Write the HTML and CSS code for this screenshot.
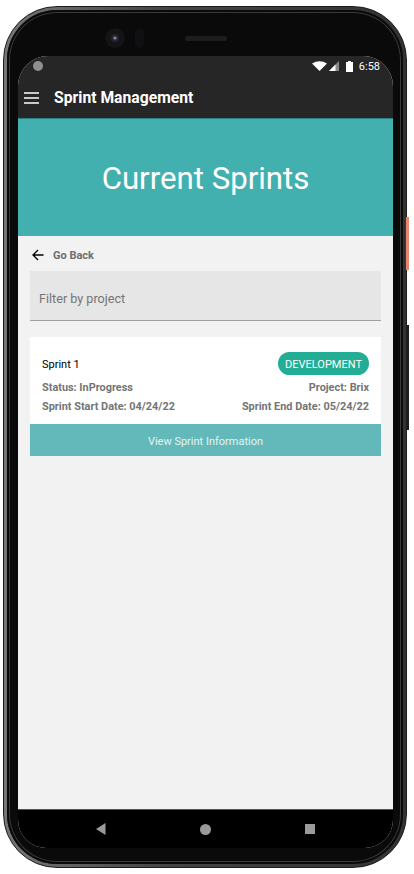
FILE: index.html
```html
<!DOCTYPE html>
<html lang="en">
<head>
    <meta charset="UTF-8">
    <meta name="viewport" content="width=device-width, initial-scale=1.0">
    <title>Sprint Management</title>
    <link rel="stylesheet" href="styles.css">
</head>
<body>
    <div class="phone">
        <span class="side-btn side-orange"></span>
        <span class="side-btn side-dark"></span>
        <div class="bezel">
            <div class="top-hw">
                <svg class="camera" width="24" height="24" viewBox="0 0 24 24">
                    <circle cx="12" cy="12" r="10" fill="#141416"/>
                    <circle cx="12" cy="12" r="4" fill="#23242c"/>
                    <circle cx="12" cy="12" r="1.6" fill="#7f88a8"/>
                </svg>
                <span class="sensor"></span>
                <span class="speaker"></span>
            </div>
            <div class="screen">
                <div class="appbar">
                    <div class="status">
                        <span class="status-dot"></span>
                        <svg class="wifi" width="15" height="10" viewBox="0 0 15 10"><path d="M0 2.500 Q7.500 -2 15 2.500 L7.500 10Z" fill="#fff"/></svg>
                        <svg class="signal" width="10" height="10" viewBox="0 0 10 10"><path d="M10 0V10H0Z" fill="#8a8a8a"/><path d="M6.500 3.500V10H0Z" fill="#fff"/></svg>
                        <svg class="battery" width="7" height="11" viewBox="0 0 7 11"><path d="M2 0H5V1H7V11H0V1H2Z" fill="#fff"/></svg>
                        <span class="clock">6:58</span>
                    </div>
                    <div class="toolbar">
                        <svg class="menu" width="15" height="12" viewBox="0 0 15 12"><path d="M0 1H15M0 6H15M0 11H15" stroke="#fff" stroke-width="1.700"/></svg>
                        <span class="app-title">Sprint Management</span>
                    </div>
                </div>
                <div class="hero">Current Sprints</div>
                <div class="content">
                    <div class="back">
                        <svg width="12" height="12" viewBox="0 0 12 12"><path d="M11.500 6H1M6 1 1 6l5 5" fill="none" stroke="#000" stroke-width="1.300"/></svg>
                        <span>Go Back</span>
                    </div>
                    <div class="filter">Filter by project</div>
                    <div class="card">
                        <div class="row row-top">
                            <span class="sprint-name">Sprint 1</span>
                            <span class="badge">DEVELOPMENT</span>
                        </div>
                        <div class="row row-info">
                            <span>Status: InProgress</span>
                            <span>Project: Brix</span>
                        </div>
                        <div class="row row-info">
                            <span>Sprint Start Date: 04/24/22</span>
                            <span>Sprint End Date: 05/24/22</span>
                        </div>
                    </div>
                    <div class="view-btn">View Sprint Information</div>
                </div>
                <div class="navbar">
                    <svg width="10" height="12" viewBox="0 0 10 12"><path d="M9.500 0V12L0 6Z" fill="#9a9a9a"/></svg>
                    <svg width="11" height="11" viewBox="0 0 11 11"><circle cx="5.500" cy="5.500" r="5.500" fill="#9a9a9a"/></svg>
                    <svg width="10" height="10" viewBox="0 0 10 10"><rect width="10" height="10" fill="#9a9a9a"/></svg>
                </div>
            </div>
        </div>
    </div>
</body>
</html>
```

FILE: styles.css
```css
body {
    font-family: Roboto, Arial, sans-serif;
    margin: 0;
    padding: 0;
    background-color: #fff;
}

.phone {
    position: relative;
    width: 404px;
    height: 862px;
    margin: 6px 0 0 3px;
    box-sizing: border-box;
    padding: 3px;
    background: linear-gradient(90deg, #777, #444 40%, #333);
    border: 1px solid #1c1c1c;
    border-radius: 54px;
}

.side-btn {
    position: absolute;
    left: 402px;
    width: 3px;
}

.side-orange {
    top: 210px;
    height: 53px;
    background-color: #e8846b;
}

.side-dark {
    top: 318px;
    height: 105px;
    background-color: #1c1c1c;
}

.bezel {
    height: 100%;
    box-sizing: border-box;
    padding: 0 10px 0 11px;
    background-color: #0a0a0b;
    border-radius: 50px;
    box-shadow: inset 0 0 0 2px #0a0a0b, inset 0 0 0 3px #3a3a3a;
    overflow: hidden;
}

.top-hw {
    position: relative;
    height: 46px;
}

.camera {
    position: absolute;
    left: 85px;
    top: 16px;
}

.sensor {
    position: absolute;
    left: 117px;
    top: 18px;
    width: 9px;
    height: 20px;
    background-color: #101012;
    border-radius: 5px;
}

.speaker {
    position: absolute;
    left: 167px;
    top: 26px;
    width: 42px;
    height: 5px;
    background-color: #1d1d1f;
    border-radius: 3px;
}

.screen {
    display: flex;
    flex-direction: column;
    width: 375px;
    height: 792px;
    background-color: #f2f2f2;
    border-radius: 30px 30px 28px 28px;
    overflow: hidden;
}

.appbar {
    background-color: #262626;
    height: 62px;
    border-bottom: 1px solid #2c7f80;
}

.status {
    display: flex;
    align-items: center;
    height: 20px;
    padding: 0 13px 0 15px;
    color: #fff;
}

.status-dot {
    width: 10px;
    height: 10px;
    margin-right: auto;
    background-color: #8f8f8f;
    border-radius: 50%;
}

.signal {
    margin-left: 2px;
}

.battery {
    margin-left: 7px;
}

.clock {
    margin-left: 6px;
    font-size: 11px;
}

.toolbar {
    display: flex;
    align-items: center;
    height: 43px;
    padding-left: 6px;
    color: #fff;
}

.app-title {
    margin-left: 15px;
    font-size: 15.700px;
    font-weight: 700;
}

.hero {
    height: 117px;
    line-height: 119px;
    text-align: center;
    font-size: 31.200px;
    color: #fff;
    background-color: #43b0b0;
}

.content {
    flex: 1;
    padding: 0 12px;
}

.back {
    display: flex;
    align-items: center;
    height: 35px;
    padding: 3px 0 0 2px;
    box-sizing: border-box;
    font-size: 11px;
    font-weight: 700;
    color: #6e6e6e;
}

.back span {
    margin-left: 9px;
}

.filter {
    height: 49px;
    line-height: 55px;
    padding-left: 9px;
    font-size: 12.600px;
    color: #757575;
    background-color: #e6e6e6;
    border-bottom: 1px solid #a0a0a0;
}

.card {
    height: 87px;
    margin-top: 16px;
    box-sizing: border-box;
    padding: 15px 12px 0;
    background-color: #fff;
}

.row {
    display: flex;
    justify-content: space-between;
    align-items: center;
}

.row-top {
    height: 23px;
    margin-bottom: 2px;
}

.row-info {
    height: 19px;
    padding-top: 1px;
    box-sizing: border-box;
    font-size: 10.900px;
    font-weight: 700;
    color: #757575;
}

.sprint-name {
    padding-top: 2px;
    font-size: 11px;
    color: #000;
}

.badge {
    width: 91px;
    height: 23px;
    line-height: 25px;
    text-align: center;
    font-size: 11px;
    color: #fff;
    background-color: #22ad94;
    border-radius: 12px;
}

.view-btn {
    height: 32px;
    line-height: 36px;
    text-align: center;
    font-size: 11px;
    color: #e3f3f3;
    background-color: #63b9b9;
}

.navbar {
    display: flex;
    flex-shrink: 0;
    justify-content: space-between;
    align-items: center;
    height: 38px;
    padding: 0 78px;
    background-color: #000;
    border-top: 1px solid #555;
}
```
